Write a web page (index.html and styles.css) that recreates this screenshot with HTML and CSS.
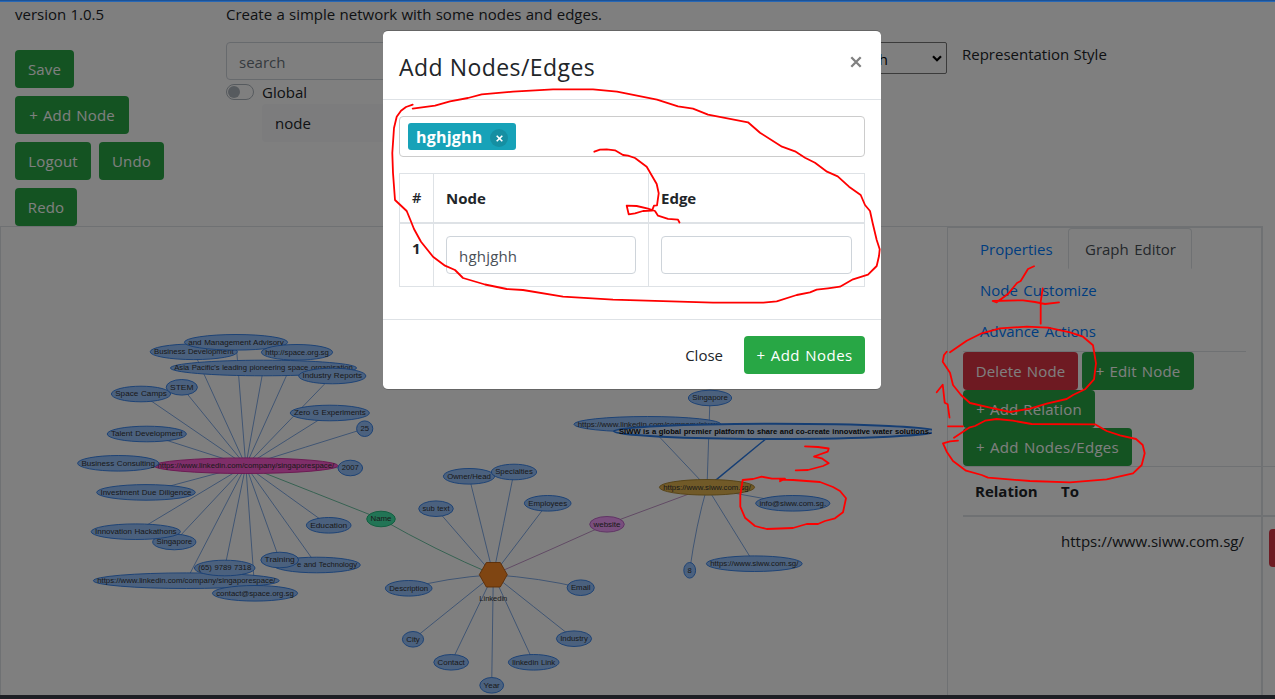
FILE: index.html
```html
<!DOCTYPE html>
<html lang="en">
<head>
<meta charset="utf-8">
<title>Graph Editor</title>
<link rel="stylesheet" href="styles.css">
</head>
<body>
<div class="page">
  <header class="top">
    <div class="col-actions">
      <p class="line">version 1.0.5</p>
      <div class="actions">
        <button class="btn green w-save">Save</button>
        <button class="btn green w-add">+ Add Node</button>
        <button class="btn green w-logout">Logout</button>
        <button class="btn green w-undo">Undo</button>
        <button class="btn green w-redo">Redo</button>
      </div>
    </div>
    <div class="col-search">
      <p class="line"><span class="intro">Create a simple network with some nodes and edges.</span></p>
      <div class="controls">
        <div class="search">
          <div class="field search-field">search</div>
          <div class="switch-row"><span class="switch"></span><span>Global</span></div>
          <div class="suggestion">node</div>
        </div>
        <div class="select"><span>Graph</span>
          <svg width="10" height="7" viewBox="0 0 10 7"><path d="M1 1.2 5 5.2 9 1.2" fill="none" stroke="#000" stroke-width="2.2"/></svg>
        </div>
        <div class="style-label">Representation Style</div>
      </div>
    </div>
  </header>
  <main class="workspace">
    <section class="canvas"><svg id="graph" width="946" height="468" viewBox="1 227 946 468"></svg></section>
    <aside class="panel">
      <nav class="tabs">
        <a class="tab t-prop">Properties</a>
        <a class="tab active">Graph Editor</a>
        <a class="tab">Node Customize</a>
        <a class="tab t-adv">Advance Actions</a>
      </nav>
      <div class="panel-actions">
        <button class="btn red w-delete">Delete Node</button>
        <button class="btn green w-edit">+ Edit Node</button>
        <button class="btn green w-rel">+ Add Relation</button>
        <button class="btn green w-ne">+ Add Nodes/Edges</button>
      </div>
      <div class="relations">
        <div class="r-head"><b>Relation</b><b>To</b></div>
        <div class="r-row"><span></span><span class="url">https://www.siww.com.sg/</span><button class="btn red w-x"></button></div>
      </div>
    </aside>
  </main>
</div>
<div class="backdrop"></div>
<div class="edge-top"></div>
<div class="edge-bottom"></div>
<div class="modal">
  <div class="m-head"><h5>Add Nodes/Edges</h5>
    <svg class="close" width="12" height="12" viewBox="0 0 12 12"><path d="M1.3 1.3 10.7 10.7M10.7 1.3 1.3 10.7" fill="none" stroke="#808080" stroke-width="2.3"/></svg>
  </div>
  <div class="m-body">
    <div class="tags"><span class="tag"><b>hghjghh</b><i><svg width="7" height="7" viewBox="0 0 7 7"><path d="M.7.7 6.3 6.3M6.3.7.7 6.3" stroke="#fff" stroke-width="1.6"/></svg></i></span></div>
    <div class="grid">
      <div class="g-cell hd num">#</div><div class="g-cell hd">Node</div><div class="g-cell hd">Edge</div>
      <div class="g-cell num">1</div><div class="g-cell"><div class="field">hghjghh</div></div><div class="g-cell"><div class="field"></div></div>
    </div>
  </div>
  <div class="m-foot"><span class="m-close">Close</span><button class="btn green w-nodes">+ Add Nodes</button></div>
</div>
<svg class="ink" width="1275" height="699" viewBox="0 0 1275 699">
  <path d="M412.7 108.7 435 105.7 450 101.3 468 98 481.7 94.3 513 91.7 553 89.3 593 89.3 617 91.7 657 99.7 678 106.3 693 108.7 708 114.7 748 122.3 760 132.7 782 146.7 795 151.3 805 157.7 815 162.7 827 171.7 837.7 176.3 849 186.7 860.7 195 865 205 870 211 872.7 223.3 876.7 240 879.7 249.3 879 256 876.7 266 868 274.7 853 279.3 840 286.7 828 288.3 816.7 289.7 810 292.3 796.7 295 776.7 301.3 763.3 302.7 713 302.7 613 299.7 563 296.7 523 290 506.7 289 485 284.5 463 278 455 270 445 265.7 433 256.7 421 241.7 414 229 410 219 406.7 211 395 200 393 173 392.3 153 394 128 396.7 116.7 401 110.7 406 107 412.7 104.7"/>
  <path d="M594.3 151.7 600 149.7 606.7 149.3 615 150.3 623 155 628 155.7 635 158 646.7 166.7 656.7 184 658.7 193.3 657 205.3 654 205.7 652 210.7 643 211 635 213.3 628.7 214.3 626.7 205.7 636.7 206 648 208.7 655 211 658 215.7 668 218.8 678 219.7 679.5 222.5"/>
  <path d="M1034 266.3 1028 269 1020.7 281 1017 283 1008 294 996.7 302.3 992.7 301 1023 300.3 1035 302 1045 304 1059 302.3M1042.7 288.3 1040.7 301.7 1040.7 323.7"/>
  <path d="M950 352.3 966.7 340.7 981.7 333.3 1000 328.3 1026.7 326.7 1048 327.7 1070 332.3 1083 336.7 1093 345.3 1096 363.3 1094 379.3 1085 389.3 1073 395 1066.7 399 1046.7 403.7 1030 408.7 1010 412 990 407.7 970 403 961 395 953 385 950 372.7 942.7 361.7 944 355 946.7 351.7"/>
  <path d="M936.7 392.3 942.7 384.7 944.7 402.7 947.7 404.3 949.5 417.5M948 426.3H963"/>
  <path d="M954 437.7 969 427.7 975 426 985 420.7 996.7 419 1013 420.7 1031.7 424 1095 424.3 1106.7 431 1120 435.3 1136 439 1142.7 445 1144.7 453.3 1141.7 465 1133 473.3 1106.7 479.3 1070 482.3 1030 481 988 477.7 981.7 475 966 470.7 953 461 946.7 451.7 943 443.3 950 441.3 958 440.7"/>
  <path d="M805 446.3 818 447 828.7 448.5 827.7 451.7 814 456.5 821.7 458.3 828.7 463.3 823 466 808 470 795.7 470.3"/>
  <path d="M780 481.3 785 478.7 772 478.7 761.7 476.7 753 479 742.7 480 740.3 495 740.3 506.7 745 517.7 755 526 766.7 529 793 528 806.7 524 818 524 825 521 835 518.3 843 512.3 846 498.3 840 491 833 487 820 482 793 480 780 479.7"/>
</svg>
<script src="graph.js"></script>
</body>
</html>
```
FILE: styles.css
```css
* { box-sizing: border-box; }
body {
  margin: 0; width: 1275px; height: 699px; overflow: hidden; position: relative;
  background: #fff; color: #212529;
  font: 15px/24px "Open Sans", "Noto Sans", sans-serif;
  word-spacing: .4px;
}
p, h5 { margin: 0; }
.page { height: 699px; display: flex; flex-direction: column; overflow: hidden; }
.top { height: 226px; padding: 2px 15px 0; display: flex; flex: none; }
.col-actions { width: 211px; }
.line { height: 40px; white-space: nowrap; }
.actions { display: flex; flex-wrap: wrap; gap: 8px; width: 160px; margin-top: 8px; }
.btn {
  border: 0; border-radius: 4px; height: 38px; padding: 0 0 1px; color: #fff; flex: none;
  font: inherit; text-align: center; white-space: nowrap; word-spacing: 1px; letter-spacing: .15px;
}
.green { background: #28a745; }
.red { background: #dc3545; }
.w-save { width: 59px; margin-right: 60px; }
.w-add { width: 114px; }
.w-logout { width: 76px; }
.w-undo { width: 65px; }
.w-redo { width: 62px; }
.col-search { flex: 1; }
.controls { display: flex; }
.search { width: 280px; }
.field {
  height: 38px; border: 1px solid #ced4da; border-radius: 4px; padding: 7px 12px 0;
  color: #495057; background: #fff;
}
.grid .field { letter-spacing: .2px; }
.search-field { color: #6c757d; }
.switch-row { display: flex; align-items: center; gap: 8px; height: 24px; }
.switch {
  width: 28px; height: 16px; border: 1px solid #adb5bd; border-radius: 8px; padding: 1px;
}
.switch::before {
  content: ""; display: block; width: 12px; height: 12px; border-radius: 50%; background: #adb5bd;
}
.suggestion {
  margin-left: 36px; height: 38px; padding: 7px 13px; border-radius: 4px; background: #f8f9fa;
}
.select {
  width: 180px; height: 32px; margin-left: 261px; padding: 1px 4px 0 0; border: 1px solid #767676; border-radius: 2px;
  display: flex; align-items: center; justify-content: flex-end; gap: 44px; color: #000;
}
.style-label { margin-left: 15px; white-space: nowrap; }
.workspace { flex: 1; display: flex; width: 1263px; border: 1px solid #dee2e6; border-width: 1px 0 0 1px; }
.canvas { width: 946px; }
.canvas svg { display: block; }
.panel { width: 316px; border: solid #dee2e6; border-width: 1px 2px 0 1px; padding: 0 15px; }
.tabs { display: flex; flex-wrap: wrap; width: 283px; height: 124px; border-bottom: 1px solid #dee2e6; }
.tab { height: 41px; padding: 8px 16px; color: #007bff; white-space: nowrap; border: 1px solid transparent; word-spacing: 1.5px; }
.t-prop { width: 105px; }
.active { width: 124px; color: #495057; border-color: #dee2e6 #dee2e6 #fff; border-radius: 4px 4px 0 0; }
.panel-actions { display: flex; flex-wrap: wrap; column-gap: 4px; width: 283px; }
.w-delete { width: 115px; }
.w-edit { width: 112px; }
.w-rel { width: 132px; margin-right: 100px; }
.w-ne { width: 169px; letter-spacing: .3px; }
.relations { width: 340px; border-top: 1px solid #dee2e6; }
.r-head, .r-row { display: grid; grid-template-columns: 86px 208px 46px; padding: 12px 0 0 12px; }
.r-head { height: 50px; border-bottom: 2px solid #dee2e6; }
.w-x { width: 40px; }
.backdrop { position: absolute; inset: 0; background: rgba(0, 0, 0, .5); }
.edge-top { position: absolute; left: 0; right: 0; top: 0; height: 2px; background: #1b5298; border-bottom: 1px solid #2767b4; }
.edge-bottom { position: absolute; left: 0; right: 0; bottom: 0; height: 4px; background: #1d1f24; }
.modal {
  position: absolute; left: 383px; top: 30px; width: 498px; height: 360px;
  background: #fff; background-clip: padding-box; border: 1px solid rgba(0, 0, 0, .2); border-width: 1px 0; border-radius: 5px;
}
.m-head { height: 69px; padding: 20px 19px 0 16px; display: flex; justify-content: space-between; border-bottom: 1px solid #dee2e6; }
.m-head h5 { font-size: 23px; line-height: 32px; font-weight: 500; letter-spacing: .42px; white-space: nowrap; }
.close { margin-top: 5px; }
.m-body { height: 219px; padding: 16px; }
.tags { height: 41px; border: 1px solid #ccc; border-radius: 4px; padding: 6px 8px; }
.tag {
  display: flex; align-items: center; width: 108px; height: 27px; padding-left: 8px;
  border-radius: 3px; background: #17a2b8; color: #fff;
}
.tag b { width: 74px; font-size: 16px; letter-spacing: .2px; }
.tag i { display: flex; align-items: center; justify-content: center; width: 18px; height: 18px; margin-top: 3px; border-radius: 50%; background: #158fa2; }
.grid { display: grid; grid-template-columns: 34px 215px 216px; grid-template-rows: 50px 63px; margin-top: 16px; border: solid #dee2e6; border-width: 1px 1px 0 0; }
.g-cell { padding: 12px; border: solid #dee2e6; border-width: 0 0 1px 1px; }
.hd { border-bottom-width: 2px; font-weight: 700; }
.num { font-weight: 700; }
.hd.num { font-weight: 600; font-size: 14.5px; }
.m-foot { height: 70px; padding: 16px; border-top: 1px solid #dee2e6; display: flex; justify-content: flex-end; align-items: flex-start; }
.m-close { padding-top: 7px; margin-right: 21px; }
.w-nodes { width: 121px; letter-spacing: .45px; }
.ink { position: absolute; left: 0; top: 0; fill: none; stroke: #f00; stroke-width: 1.8; stroke-linejoin: round; stroke-linecap: round; pointer-events: none; }
.node { fill: #97c2fc; stroke: #2b7ce9; stroke-width: .9; }
.pink { fill: #ff5cd2; stroke: #d32d9f; }
.mint { fill: #45e8ab; stroke: #18b978; }
.violet { fill: #f39cfa; stroke: #b95fc4; }
.gold { fill: #e2b450; stroke: #a98228; }
.orange { fill: #ff8a24; stroke: #b8590a; }
.selected { fill: #d2e5ff; stroke-width: 2; }
.label { font: 8px "Liberation Sans", Arial, sans-serif; fill: #343434; text-anchor: middle; }
.label.strong { font-weight: 700; fill: #111; }
.link { fill: none; stroke: #5f94e0; stroke-width: .8; }
.link.mint-line { stroke: #48b48c; }
.link.violet-line { stroke: #b27abb; }
.link.heavy { stroke: #2b7ce9; stroke-width: 1.5; }
```
FILE: graph.js
```js
const svg = document.getElementById("graph");
const add = (tag, attrs, text) => {
  const el = document.createElementNS("http://www.w3.org/2000/svg", tag);
  for (const key in attrs) el.setAttribute(key, attrs[key]);
  if (text) el.textContent = text;
  svg.appendChild(el);
};
const company = [245.8, 465.7], linkedin = [493.3, 574.7], siww = [707, 487.3];

// label, x, y, rx, hub, class
const nodes = [
  ["https://www.linkedin.com/company/singaporespace/", 245.8, 465.7, 92.5, null, "pink"],
  ["Business Development", 193.8, 351.8, 44, company],
  ["and Management Advisory", 236, 342.3, 52, company],
  ["http://space.org.sg", 297, 352.3, 36, company],
  ["Asia Pacific's leading pioneering space organisation", 263.5, 368, 93.5, company],
  ["Industry Reports", 332.3, 376, 34, company],
  ["Space Camps", 141, 394, 30, company],
  ["STEM", 181.8, 387.3, 16, company],
  ["Zero G Experiments", 329.8, 413, 40, company],
  ["25", 364.7, 428.7, 8.5, company],
  ["Talent Development", 146.8, 434, 40, company],
  ["Business Consulting", 118.2, 463.3, 41, company],
  ["2007", 350.3, 468, 12.7, company],
  ["Investment Due Diligence", 146, 492.4, 49.7, company],
  ["Singapore", 174.3, 542, 22, company],
  ["Innovation Hackathons", 135.8, 531.7, 45, company],
  ["https://www.linkedin.com/company/singaporespace/", 186.3, 580.7, 93.3, company],
  ["(65) 9789 7318", 224.7, 568, 30.7, company],
  ["contact@space.org.sg", 255, 593.3, 43, company],
  ["e and Technology", 316.7, 565, 44, company],
  ["Training", 279.7, 560, 19.3, company],
  ["Education", 328.7, 525.3, 22.7, company],
  ["Name", 381, 519, 14.7, null, "mint"],
  ["Owner/Head", 469, 476.3, 26, linkedin],
  ["Specialties", 514, 472, 23, linkedin],
  ["sub text", 436, 508.7, 17.7, linkedin],
  ["Employees", 547.7, 503.3, 23.7, linkedin],
  ["website", 607, 524.3, 17.7, null, "violet"],
  ["Description", 408.7, 588.3, 23.7, linkedin],
  ["City", 413, 639.3, 11, linkedin],
  ["Contact", 451.2, 662.3, 17.8, linkedin],
  ["Year", 491.7, 685.3, 12.3, linkedin],
  ["linkedin Link", 533.7, 662.3, 25.7, linkedin],
  ["Industry", 574, 638.7, 18, linkedin],
  ["Email", 580.7, 587.7, 14, linkedin],
  ["Singapore", 710, 398, 22, siww],
  ["https://www.linkedin.com/company/siww", 647.5, 424.3, 74, siww],
  ["https://www.siww.com.sg/", 707, 487.3, 48, null, "gold"],
  ["info@siww.com.sg.", 792.8, 503.3, 37.5, siww],
  ["8", 689.7, 570.3, 6.3, siww],
  ["https://www.siww.com.sg/", 754.3, 563.7, 48.3, siww]
];
const bend = { Description: [445, 578], Email: [540, 578], "8": [696, 525], "info@siww.com.sg.": [740, 495] };
// labels whose text box is not centred on the ellipse: [x, width]
const placed = { "e and Technology": [327, 60], "8": [689.7, 4.2] };
const link = (a, b, mid, cls) =>
  add("path", { class: "link " + (cls || ""), d: `M${a}Q${mid || [(a[0] + b[0]) / 2, (a[1] + b[1]) / 2]} ${b}` });

for (const [label, x, y, , hub] of nodes) if (hub) link(hub, [x, y], bend[label]);
link(company, [381, 519], null, "mint-line");
link([381, 519], linkedin, [435, 550], "mint-line");
link(linkedin, [607, 524.3], [550, 550], "violet-line");
link([607, 524.3], siww, null, "violet-line");
link(siww, [775, 431.3], null, "heavy");

const caption = (text, x, y, width, cls) =>
  add("text", { class: "label " + (cls || ""), x, y: y + 2.6, textLength: width, lengthAdjust: "spacingAndGlyphs" }, text);

for (const [label, x, y, rx, , cls] of nodes) {
  add("ellipse", { class: "node " + (cls || ""), cx: x, cy: y, rx: rx - 0.4, ry: 7.8 });
  const [cx, width] = placed[label] || [x, 2 * rx - 8.4];
  caption(label, cx, y - 0.3, width);
}
add("path", { class: "node orange", d: "M479.3 574.7 486.3 562.5H500.3L507.3 574.7 500.3 587H486.3Z" });
caption("Linkedin", 493.3, 598.3, 28);

add("clipPath", { id: "canvas-edge" });
const rect = document.createElementNS("http://www.w3.org/2000/svg", "rect");
for (const [k, v] of Object.entries({ x: 0, y: 227, width: 932, height: 468 })) rect.setAttribute(k, v);
document.getElementById("canvas-edge").appendChild(rect);
add("ellipse", { class: "node selected", cx: 775, cy: 431.3, rx: 161, ry: 7.6, "clip-path": "url(#canvas-edge)" });
caption("SIWW is a global premier platform to share and co-create innovative water solutions.", 775, 431.3, 312, "strong");
```
